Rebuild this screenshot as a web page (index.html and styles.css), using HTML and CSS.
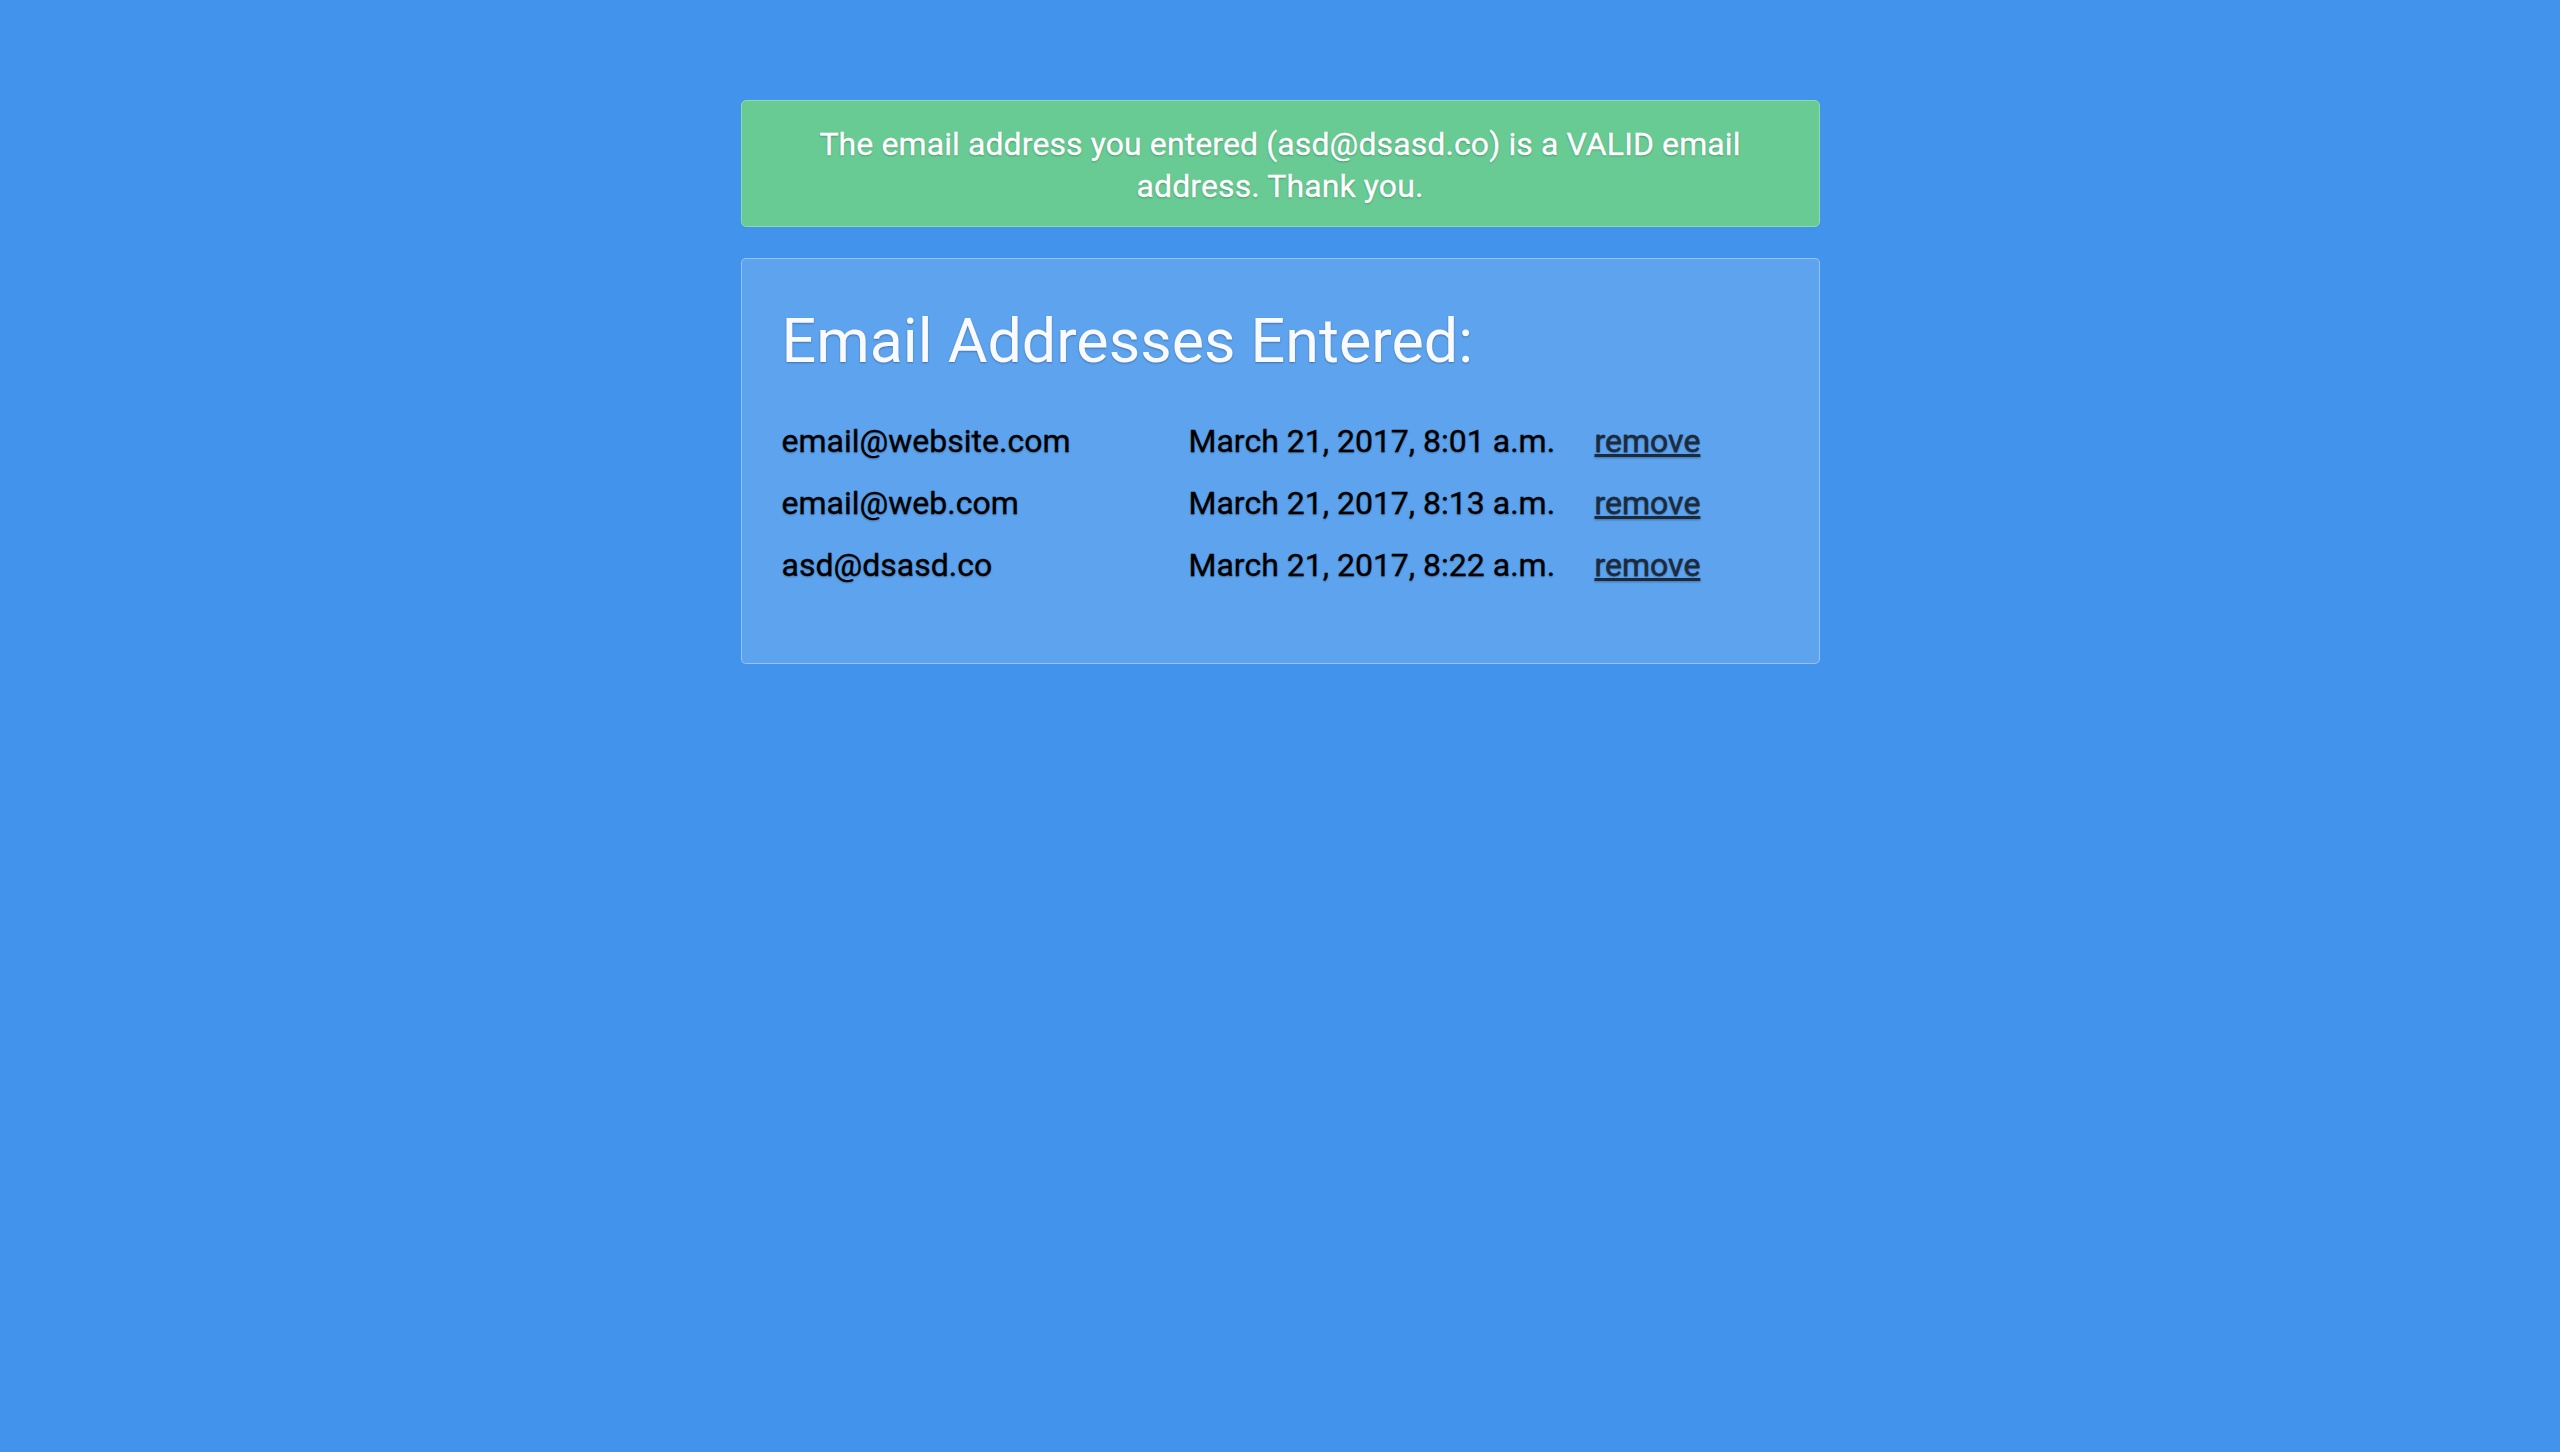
FILE: index.html
```html
<!DOCTYPE html>
<html lang="en">
<head>
<meta charset="utf-8">
<title>Email Addresses</title>
<link rel="stylesheet" href="styles.css">
</head>
<body>
<main class="wrap">
  <div class="alert">The email address you entered (asd@dsasd.co) is a VALID email address. Thank you.</div>
  <section class="panel">
    <h1 class="title">Email Addresses Entered:</h1>
    <div class="list">
      <div class="row">
        <span class="email">email@website.com</span>
        <span class="date">March 21, 2017, 8:01 a.m.</span>
        <a class="remove" href="#">remove</a>
      </div>
      <div class="row">
        <span class="email">email@web.com</span>
        <span class="date">March 21, 2017, 8:13 a.m.</span>
        <a class="remove" href="#">remove</a>
      </div>
      <div class="row">
        <span class="email">asd@dsasd.co</span>
        <span class="date">March 21, 2017, 8:22 a.m.</span>
        <a class="remove" href="#">remove</a>
      </div>
    </div>
  </section>
</main>
</body>
</html>
```
FILE: styles.css
```css
html {
  background: #4193ec;
}
body {
  margin: 0;
  padding: 0;
  background: #4193ec;
  font-family: Roboto, "Liberation Sans", sans-serif;
}
.wrap {
  width: 1079px;
  margin: 0 auto;
  padding-top: 100px;
}
.alert {
  background: #68cb94;
  border: 1px solid #8edaa9;
  border-radius: 5px;
  color: #ffffff;
  text-align: center;
  font-size: 32px;
  letter-spacing: 0.1px;
  line-height: 42px;
  padding: 22px 40px 19px;
  text-shadow: 0 1px 2px rgba(0, 0, 0, 0.3);
  -webkit-text-stroke: 0.3px #ffffff;
}
.panel {
  margin-top: 31px;
  background: rgba(255, 255, 255, 0.15);
  border: 1px solid rgba(255, 255, 255, 0.35);
  border-radius: 5px;
  padding: 40px 40px 67px;
}
.title {
  margin: 7px 0 34px;
  font-size: 61px;
  font-weight: 400;
  line-height: 70px;
  color: #f8faff;
  text-shadow: 0 1px 2px rgba(0, 0, 0, 0.3);
}
.row {
  display: grid;
  grid-template-columns: 407px 406px 1fr;
  font-size: 32px;
  line-height: 62px;
  color: #000;
  text-shadow: 0 1px 2px rgba(0, 0, 0, 0.3);
  -webkit-text-stroke: 0.3px #000;
}
.remove {
  color: #1c2a3d;
  justify-self: start;
  -webkit-text-stroke: 0.3px #1c2a3d;
}
```
